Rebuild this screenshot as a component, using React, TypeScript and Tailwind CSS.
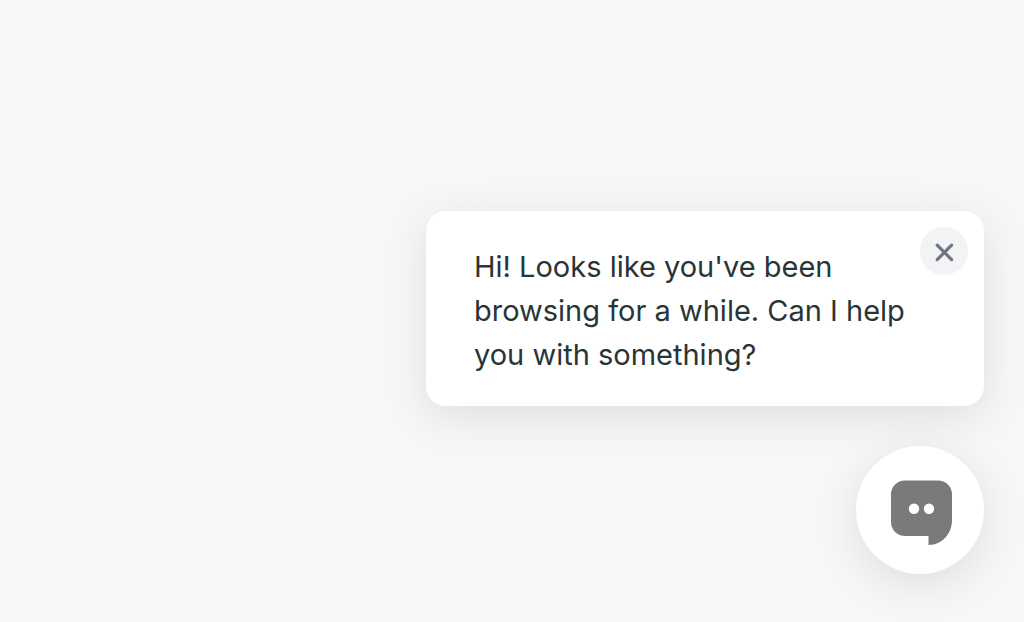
import React, { useState } from "react";

interface GreetingProps {
  message: string;
  onClose: () => void;
}

const Greeting: React.FC<GreetingProps> = ({ message, onClose }) => {
  return (
    <div
      role="status"
      className="flex w-full max-w-[558px] items-start rounded-[20px] bg-white pl-12 pr-4 shadow-[0_10px_44px_rgba(0,0,0,0.1)]"
    >
      <p className="min-w-0 flex-1 pt-[34px] pb-[29px] text-[29px] leading-[44px] text-[#283538]">
        {message}
      </p>
      <button
        type="button"
        aria-label="Close message"
        onClick={onClose}
        className="mt-4 flex size-12 shrink-0 items-center justify-center rounded-full bg-[#f3f3f6]"
      >
        <svg
          viewBox="0 0 24 24"
          className="size-6"
          fill="none"
          stroke="#6c7682"
          strokeWidth="3.2"
          strokeLinecap="round"
        >
          <path d="M5.2 6.200 19.600 20.600M19.600 6.200 5.200 20.600" />
        </svg>
      </button>
    </div>
  );
};

const ChatIcon: React.FC = () => (
  <svg viewBox="0 0 64 70" className="h-[70px] w-16" aria-hidden="true">
    <path
      d="M17 5.500H50A14 14 0 0 1 64 19.500V45C64 59 54 70 40.500 70V61H17A14 14 0 0 1 3 47V19.500A14 14 0 0 1 17 5.500Z"
      fill="#7a7a7a"
    />
    <circle cx="26" cy="33.700" r="5.200" fill="#fff" />
    <circle cx="41" cy="33.700" r="5.200" fill="#fff" />
  </svg>
);

const App: React.FC = () => {
  const [showGreeting, setShowGreeting] = useState(true);

  return (
    <main className="flex min-h-screen flex-col items-end justify-end gap-10 bg-[#f7f7f7] px-10 pb-12 font-['Inter','Liberation_Sans',sans-serif]">
      {showGreeting && (
        <Greeting
          message="Hi! Looks like you've been browsing for a while. Can I help you with something?"
          onClose={() => setShowGreeting(false)}
        />
      )}
      <button
        type="button"
        aria-label="Open chat"
        onClick={() => setShowGreeting(true)}
        className="flex size-32 items-center justify-center rounded-full bg-white shadow-[0_10px_44px_rgba(0,0,0,0.1)]"
      >
        <ChatIcon />
      </button>
    </main>
  );
};

export default App;
